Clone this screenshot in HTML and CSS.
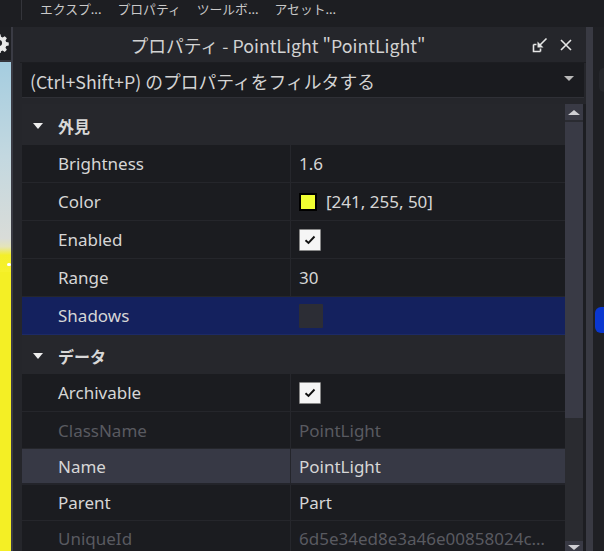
FILE: index.html
```html
<!DOCTYPE html>
<html lang="ja">
<head>
<meta charset="utf-8">
<link rel="stylesheet" href="styles.css">
</head>
<body>
<div class="app">
  <div class="topbar">
    <div class="topbar-left"></div>
    <div class="tabs">
      <span class="tab">エクスプ...</span>
      <span class="tab">プロパティ</span>
      <span class="tab">ツールボ...</span>
      <span class="tab">アセット...</span>
    </div>
  </div>
  <div class="main">
    <div class="left">
      <div class="viewport">
        <div class="vp-top">
          <svg class="gear" width="20" height="20" viewBox="0 0 16 16"><path d="M6.8 1h2.4l.4 2 1.3.6 1.7-1.1 1.7 1.7-1.1 1.7.6 1.3 2 .4v2.4l-2 .4-.6 1.3 1.1 1.7-1.7 1.7-1.7-1.1-1.3.6-.4 2H6.8l-.4-2-1.3-.6-1.7 1.1-1.7-1.7 1.1-1.7-.6-1.3-2-.4V6.8l2-.4.6-1.3-1.1-1.7 1.7-1.7 1.7 1.1 1.3-.6zM8 5.5A2.5 2.5 0 1 0 8 10.5 2.5 2.5 0 1 0 8 5.5z" fill="#e8e8e8" fill-rule="evenodd"/></svg>
        </div>
        <div class="vp-img"><span class="vp-dot"></span></div>
      </div>
      <div class="vp-edge"></div>
      <div class="vp-gap"></div>
    </div>
    <div class="panel">
      <div class="titlebar">
        <div class="title">プロパティ - PointLight "PointLight"</div>
        <div class="title-btns">
          <svg width="16" height="16" viewBox="0 0 16 16" class="dock"><path d="M1.5 7.5v7h7" fill="none" stroke="#e6e6e6" stroke-width="1.6"/><path d="M1.5 7.5h3M8.5 14.5v-3" fill="none" stroke="#e6e6e6" stroke-width="1.6"/><path d="M14.5 1.5L7 9" stroke="#e6e6e6" stroke-width="1.6"/><path d="M5.5 4.5v6h6z" fill="#e6e6e6"/></svg>
          <svg width="12" height="12" viewBox="0 0 12 12" class="close"><path d="M1 1l10 10M11 1L1 11" stroke="#e6e6e6" stroke-width="1.6"/></svg>
        </div>
      </div>
      <div class="filter">
        <span class="filter-text">(Ctrl+Shift+P) のプロパティをフィルタする</span>
        <span class="filter-arrow"></span>
      </div>
      <div class="list-wrap">
        <div class="list">
          <div class="row header"><span class="tri"></span><span class="hname">外見</span></div>
          <div class="row"><div class="name">Brightness</div><div class="val">1.6</div></div>
          <div class="row"><div class="name">Color</div><div class="val"><span class="swatch"></span>[241, 255, 50]</div></div>
          <div class="row"><div class="name">Enabled</div><div class="val"><span class="check on"><svg width="12" height="10" viewBox="0 0 12 10"><path d="M1.5 5.2l3 2.8 6-6.5" fill="none" stroke="#111" stroke-width="1.9"/></svg></span></div></div>
          <div class="row"><div class="name">Range</div><div class="val">30</div></div>
          <div class="row selected"><div class="name">Shadows</div><div class="val"><span class="check off"></span></div></div>
          <div class="row header second"><span class="tri"></span><span class="hname">データ</span></div>
          <div class="row"><div class="name">Archivable</div><div class="val"><span class="check on"><svg width="12" height="10" viewBox="0 0 12 10"><path d="M1.5 5.2l3 2.8 6-6.5" fill="none" stroke="#111" stroke-width="1.9"/></svg></span></div></div>
          <div class="row dim mid"><div class="name">ClassName</div><div class="val">PointLight</div></div>
          <div class="row hover tight"><div class="name">Name</div><div class="val">PointLight</div></div>
          <div class="row tight"><div class="name">Parent</div><div class="val">Part</div></div>
          <div class="row dim tight"><div class="name">UniqueId</div><div class="val"><span class="ellip">6d5e34ed8e3a46e00858024c87a1b2c3</span></div></div>
        </div>
        <div class="scrollbar">
          <div class="sb-up"><span class="sb-tri-up"></span></div>
          <div class="sb-thumb"></div>
          <div class="sb-track"></div>
          <div class="sb-down"><span class="sb-tri-down"></span></div>
        </div>
        <div class="panel-edge"></div>
      </div>
    </div>
    <div class="splitter"></div>
    <div class="right">
      <div class="right-box"></div>
      <div class="blue-btn"></div>
    </div>
  </div>
</div>
</body>
</html>
```
FILE: styles.css
```css
* { box-sizing: border-box; }
html, body { margin: 0; padding: 0; }
body {
  width: 604px;
  height: 551px;
  overflow: hidden;
  background: #1d1e22;
  font-family: "Noto Sans", "Noto Sans CJK JP", sans-serif;
  color: #d8d8d8;
}
.app { width: 604px; height: 551px; display: flex; flex-direction: column; }

.topbar { height: 27px; display: flex; background: #1d1e22; flex: none; }
.topbar-left { width: 22px; height: 20px; border-right: 1px solid #34353b; }
.tabs { display: flex; gap: 16px; padding-left: 18px; font-family: "Noto Sans CJK JP", sans-serif; font-size: 12.8px; line-height: 17px; color: #c9c9c9; }
.tab { white-space: nowrap; }

.main { flex: 1; display: flex; min-height: 0; }

.left { width: 20px; display: flex; flex: none; }
.viewport { width: 11px; display: flex; flex-direction: column; overflow: hidden; }
.vp-top { height: 35px; background: #1e1f23; border-bottom: 2px solid #34353c; padding-top: 6px; overflow: hidden; }
.gear { display: block; margin-left: -11px; }
.vp-img {
  flex: 1; position: relative;
  background: linear-gradient(180deg, #a5cde0 0%, #c3d8e0 45%, #d9dcd8 84%, #e5e4b8 88%, #f4ef2a 92%, #f6f12c 100%);
  background-size: 100% 210px;
  background-repeat: no-repeat;
  background-color: #f4ef25;
}
.vp-dot { position: absolute; left: 7px; top: 201px; width: 4px; height: 3px; background: #fff; border-radius: 2px; }
.vp-edge { width: 2px; background: #3a3b44; }
.vp-gap { width: 7px; background: #24252a; }

.panel { width: 566px; display: flex; flex-direction: column; background: #25262b; flex: none; }
.titlebar { height: 36px; display: flex; align-items: center; border-bottom: 1px solid #1c1d21; flex: none; }
.title { flex: 1; text-align: center; padding-left: 4px; font-family: "Noto Sans CJK JP", sans-serif; font-size: 17.8px; color: #d2d2d2; white-space: nowrap; }
.title-btns { width: 54px; display: flex; align-items: center; gap: 12px; }
.dock { margin-top: 1px; }

.filter {
  height: 35px; margin: 0 2px; flex: none;
  background: #1a1b1f; border-bottom: 1px solid #2f3036;
  display: flex; align-items: center; justify-content: space-between;
  padding: 0 10px 0 8px;
}
.filter-text { font-family: "Noto Sans CJK JP", sans-serif; font-size: 17.8px; color: #d4d4d4; white-space: nowrap; padding-top: 2px; }
.filter-arrow { width: 0; height: 0; border-left: 5px solid transparent; border-right: 5px solid transparent; border-top: 5px solid #b8b8b8; margin-bottom: 3px; }

.list-wrap { flex: 1; display: flex; margin-top: 6px; min-height: 0; padding-left: 2px; }
.list { flex: 1; display: flex; flex-direction: column; overflow: hidden; }

.row { height: 38px; flex: none; display: flex; align-items: center; background: #1b1c20; border-bottom: 1px solid #25262b; font-size: 17px; }
.row.mid { height: 37px; }
.row.tight { height: 36px; }
.row .name { width: 269px; height: 100%; display: flex; align-items: center; padding-left: 36px; border-right: 1px solid #26272c; color: #d6d6d6; white-space: nowrap; }
.row .val { flex: 1; min-width: 0; display: flex; align-items: center; padding-left: 8px; color: #d6d6d6; white-space: nowrap; overflow: hidden; }
.row.header { height: 41px; background: #26272c; border-bottom: none; padding-left: 11px; padding-top: 2px; }
.row.header.second { height: 39px; }
.tri { width: 0; height: 0; border-left: 5px solid transparent; border-right: 5px solid transparent; border-top: 6px solid #eeeeee; margin-right: 15px; }
.hname { font-family: "Noto Sans CJK JP", sans-serif; font-weight: 700; font-size: 16px; color: #d8d8d8; }
.row.selected { background: #14215e; border-bottom-color: #1c2a66; }
.row.selected .name { border-right-color: #14215e; }
.row.hover { background: #373945; border-bottom: 2px solid #23242a; }
.row.hover .name { border-right-color: #24252b; }
.row.dim .name, .row.dim .val { color: #595a60; }
.ellip { overflow: hidden; text-overflow: ellipsis; white-space: nowrap; display: block; width: 250px; }

.swatch { width: 18px; height: 18px; background: #f1ff32; border: 2px solid #000; margin-right: 9px; }
.check { width: 22px; height: 22px; display: flex; align-items: center; justify-content: center; border-radius: 1px; }
.check.on { background: #f5f5f5; border: 1px solid #888; }
.check.off { background: #2c2d35; width: 24px; height: 24px; }

.scrollbar { width: 18px; display: flex; flex-direction: column; background: #2a2b31; flex: none; }
.sb-up { height: 18px; background: #393a45; display: flex; align-items: center; justify-content: center; border-bottom: 2px solid #2a2b31; }
.sb-tri-up { width: 0; height: 0; border-left: 6px solid transparent; border-right: 6px solid transparent; border-bottom: 5px solid #cfcfd4; }
.sb-thumb { height: 296px; background: #393a45; }
.sb-track { flex: 1; background: #2a2b30; }
.sb-down { height: 10px; background: #393a45; display: flex; justify-content: center; padding-top: 4px; }
.sb-tri-down { width: 0; height: 0; border-left: 6px solid transparent; border-right: 6px solid transparent; border-top: 5px solid #cfcfd4; }
.panel-edge { width: 3px; background: #1d1e22; }

.splitter { width: 7px; background: #393a43; flex: none; }
.right { flex: 1; background: #1f2024; display: flex; flex-direction: column; padding-top: 41px; padding-left: 2px; }
.right-box { height: 24px; border-radius: 6px 0 0 6px; background: #26272c; margin-bottom: 215px; margin-left: 4px; }
.blue-btn { height: 26px; background: #0a37d0; border-radius: 6px 0 0 6px; }
```
